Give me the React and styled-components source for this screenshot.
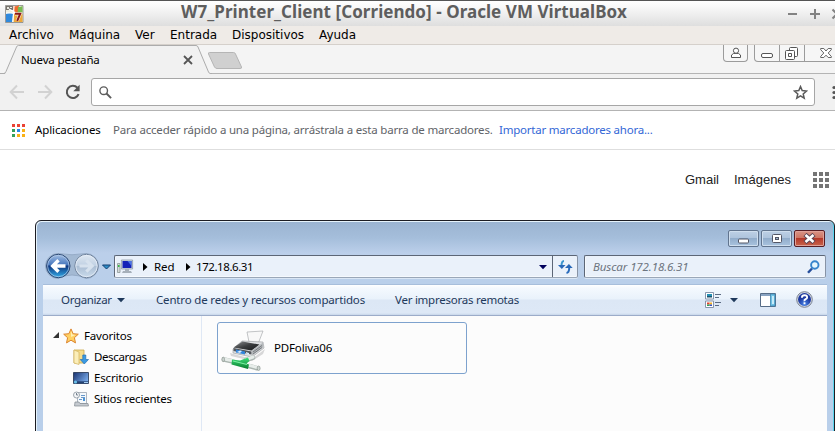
import React from 'react';
import styled, { createGlobalStyle } from 'styled-components';

const Global = createGlobalStyle`
  * { box-sizing: border-box; }
  html, body { margin: 0; padding: 0; }
  body { width: 835px; height: 431px; overflow: hidden; background: #fff; }
  svg { display: block; flex: none; }
`;

const ui = `"Noto Sans", "Open Sans", sans-serif`;

const Screen = styled.div`
  width: 835px;
  height: 431px;
  overflow: hidden;
  display: flex;
  flex-direction: column;
  background: #fff;
`;

const Label = styled.span`
  flex: none;
  display: block;
  width: ${(p) => (p.$w ? `${p.$w}px` : 'auto')};
  font: ${(p) => (p.$italic ? 'italic ' : '')}${(p) => p.$size || 11.5}px/16px ${(p) => p.$font || ui};
  letter-spacing: ${(p) => p.$ls || 0}px;
  color: ${(p) => p.$color || '#000'};
  white-space: nowrap;
`;

/* ---------- host window ---------- */
const TitleBar = styled.header`
  flex: none;
  height: 26px;
  display: flex;
  align-items: center;
  padding-left: 5px;
  border-top: 1px solid #555;
  background: linear-gradient(#fff, #fafafa 20%, #dedede);
`;
const HostTitle = styled.h1`
  flex: none;
  margin: 0 0 0 157px;
  width: 606px;
  font: bold 17px/20px "Noto Sans", sans-serif;
  padding-bottom: 3px;
  letter-spacing: ${(p) => p.$ls}px;
  color: #5e5e5e;
  white-space: nowrap;
`;
const MenuBar = styled.nav`
  flex: none;
  height: 19px;
  display: flex;
  align-items: center;
  padding: 0 0 0 9px;
  background: #efebe7;
  border-bottom: 1px solid #d5d0cb;
`;

/* ---------- browser ---------- */
const TabStrip = styled.div`
  flex: none;
  height: 29px;
  display: flex;
  align-items: flex-start;
  background: #f4f4f4;
  box-shadow: inset 0 -1px #b4b4b4;
`;
const Tab = styled.div`
  position: relative;
  flex: none;
  width: 212px;
  height: 29px;
  padding: 7px 0 0 21px;
  display: flex;
`;
const TabShape = styled.svg`
  position: absolute;
  left: 0;
  top: 0;
`;
const TabContent = styled.div`
  position: relative;
  display: flex;
`;
const NewTab = styled.svg`
  overflow: visible;
`;
const ChromeButtons = styled.div`
  flex: none;
  width: ${(p) => p.$w}px;
  height: 17px;
  margin-left: ${(p) => p.$ml}px;
  display: flex;
  border: 1px solid #9b9b9b;
  border-top: 0;
  border-radius: 0 0 4px 4px;
  background: #f6f6f6;
`;
const ChromeButton = styled.div`
  flex: none;
  width: ${(p) => p.$w}px;
  padding: 0 0 0 ${(p) => p.$pl}px;
  border-right: ${(p) => (p.$last ? 0 : 1)}px solid #9b9b9b;
`;
const BrowserBar = styled.div`
  flex: none;
  height: 37px;
  display: flex;
  align-items: center;
  padding: 0 0 0 9px;
  background: #f1f1f1;
  border-bottom: 1px solid #b3b3b3;
`;
const Omnibox = styled.div`
  flex: none;
  width: 724px;
  height: 28px;
  margin: 0 17px 0 10px;
  display: flex;
  align-items: center;
  justify-content: space-between;
  padding: 0 6px 0 7px;
  border: 1px solid #a6a6a6;
  border-radius: 3px;
  background: #fff;
`;
const Bookmarks = styled.div`
  flex: none;
  height: 39px;
  display: flex;
  align-items: center;
  padding-left: 12px;
  border-bottom: 1px solid #dedede;
`;
const DotGrid = styled.div`
  flex: none;
  display: grid;
  grid-template-columns: repeat(3, ${(p) => p.$s}px);
  grid-auto-rows: ${(p) => p.$s}px;
  gap: ${(p) => p.$gap}px;
  margin-right: ${(p) => p.$mr || 0}px;
`;
const Dot = styled.i`
  background: ${(p) => p.$c};
`;
const GoogleLinks = styled.div`
  flex: none;
  height: 70px;
  display: flex;
  align-items: center;
  padding: 0 0 10px 685px;
`;

/* ---------- explorer window ---------- */
const Explorer = styled.section`
  flex: none;
  width: 800px;
  height: 230px;
  margin-left: 35px;
  padding: 0 6px 0 7px;
  border: 1px solid #1c1c22;
  border-radius: 6px 6px 0 0;
  box-shadow: inset 1px 1px #e6f3fb, inset -1px 0 #58d4ee;
  background: linear-gradient(#9ab3d0 0, #a5bedb 17px, #bbcfea 32px, #b9cfea 62px);
`;
const Caption = styled.div`
  height: 34px;
  display: flex;
  justify-content: flex-end;
  gap: 2px;
  padding: 9px 3px 0 0;
`;
const CaptionButton = styled.div`
  width: 31px;
  height: 17px;
  display: flex;
  align-items: center;
  justify-content: center;
  border: 1px solid ${(p) => (p.$close ? '#571d24' : '#61748e')};
  border-radius: 2px;
  box-shadow: inset 0 0 0 1px ${(p) => (p.$close ? '#e0a198' : '#cfdeee')};
  background: ${(p) =>
    p.$close
      ? 'linear-gradient(#d99587, #cd7362 48%, #b5392a 50%, #c8654d)'
      : 'linear-gradient(#bed0e5, #adc3dc 48%, #92adcb 50%, #a9c3df)'};
`;
const NavRow = styled.div`
  height: 29px;
  display: flex;
  align-items: flex-start;
  padding-left: 2px;
`;
const NavSlot = styled.div`
  flex: none;
  width: 69px;
  margin-top: -3px;
`;
const Field = styled.div`
  flex: none;
  width: ${(p) => p.$w}px;
  height: 23px;
  margin-right: ${(p) => p.$mr || 0}px;
  padding: 0 0 0 ${(p) => p.$pl}px;
  display: flex;
  align-items: center;
  border: 1px solid #5c6676;
  border-bottom-color: #9aa7b8;
  border-right-color: #8793a5;
  border-radius: 2px;
  box-shadow: 0 1px #d9e6f5, inset 0 -1px #f5f9fd, inset 1px 0 #f5f9fd;
  background: #eaf1fa;
`;
const Refresh = styled.div`
  width: 25px;
  height: 21px;
  display: flex;
  align-items: center;
  justify-content: center;
  border-left: 1px solid #5c6676;
`;
const Client = styled.div`
  width: 784px;
  height: 166px;
  background: #fcfcfc;
`;
const CommandBar = styled.div`
  height: 32px;
  display: flex;
  align-items: center;
  padding: 0 0 1px 18px;
  border-top: 1px solid #a7bedb;
  border-bottom: 1px solid #9cacc9;
  background: linear-gradient(#fff 0, #f4f9fe 3px, #e9f2fb 14px, #dce7f5 15px, #dde8f6 28px, #c7d6e9 30px);
`;
const Panes = styled.div`
  display: flex;
  height: 134px;
`;
const Sidebar = styled.div`
  flex: none;
  width: 159px;
  border-right: 1px solid #dfe8f5;
  padding-top: 9px;
`;
const TreeRow = styled.div`
  height: 21px;
  display: flex;
  align-items: center;
  padding-left: ${(p) => p.$pl}px;
`;
const TreeIcon = styled.div`
  flex: none;
  width: 16px;
  margin-right: 5px;
`;
const Files = styled.div`
  padding: 6px 0 0 15px;
`;
const FileItem = styled.div`
  width: 250px;
  height: 52px;
  display: flex;
  align-items: center;
  padding-left: 2px;
  border: 1px solid #7da2ce;
  border-radius: 3px;
`;
const Slot = styled.div`
  flex: none;
  width: ${(p) => p.$w}px;
`;

/* ---------- icons ---------- */
const VmIcon = () => (
  <svg width="19" height="18" viewBox="0 0 19 18">
    <path fill="#ededdf" stroke="#777" strokeWidth=".7" d="M.5.5h17.500v17H.5z" />
    <path fill="#77736d" d="M1 1h7v4H1z" />
    <path fill="#e8e8e0" d="M2 2h2v2H2zM5 2h2v1H5z" />
    <path fill="#ef6a2d" d="M8 1q4 1 6-1l-1 8-5 1z" />
    <path fill="#78bb50" d="M13 2q3 0 4.500-1v7l-5 1z" />
    <path fill="#2f89dc" d="M1 9q4-2 7 0l-1 8H1z" />
    <path fill="#eda83a" d="M8 9h9.500v8H8z" />
    <path fill="none" stroke="#fff" strokeWidth="1.200" d="M9 1 8 17M1 8h16M4 4l9 5" />
    <path fill="none" stroke="#f7e5d0" strokeWidth="3.200" d="M10 8.800h5.200l-3 7" />
    <path fill="none" stroke="#8b1818" strokeWidth="2" d="M10 8.800h5.200l-3 7" />
  </svg>
);
const HostButtons = () => (
  <svg width="48" height="20" viewBox="0 0 48 20">
    <path fill="none" stroke="#828282" strokeWidth="2" d="M1 10h9M23 10h10M28 5v10M45.500 5.500l9 9m0-9-9 9" />
  </svg>
);
const Arrow = ({ flip }) => (
  <svg width="16" height="16" viewBox="0 0 16 16">
    <path fill="none" stroke="#d2d2d2" strokeWidth="2" d={flip ? 'M1 8h13M8 1.5 14.3 8 8 14.5' : 'M15 8H2M8 1.5 1.7 8 8 14.5'} />
  </svg>
);
const Reload = () => (
  <svg width="16" height="16" viewBox="0 0 16 16">
    <path fill="none" stroke="#555" strokeWidth="2" d="M13.6 10.2A6.1 6.1 0 1 1 12.4 3.8" />
    <path fill="#555" d="M14.6.8v6.4H8.3z" />
  </svg>
);
const Magnifier = () => (
  <svg width="13" height="13" viewBox="0 0 13 13">
    <circle cx="4.700" cy="4.700" r="3.800" fill="none" stroke="#5c5c5c" strokeWidth="1.400" />
    <path stroke="#5c5c5c" strokeWidth="1.900" d="m7.500 7.500 4.600 4.600" />
  </svg>
);
const Star = () => (
  <svg width="15" height="15" viewBox="0 0 15 15">
    <path fill="none" stroke="#5a5a5a" strokeWidth="1.500" d="m7.500 1.600 1.700 4 4.300.4-3.300 2.900 1 4.300-3.700-2.300-3.700 2.300 1-4.300L1.500 6l4.300-.4z" />
  </svg>
);
const Kebab = () => (
  <svg width="4" height="15" viewBox="0 0 4 15" fill="#555">
    <circle cx="2" cy="2.500" r="1.600" /><circle cx="2" cy="7.500" r="1.600" /><circle cx="2" cy="12.500" r="1.600" />
  </svg>
);
const Person = () => (
  <svg width="12" height="14" viewBox="0 0 12 14">
    <path fill="#fff" stroke="#555" d="M1.500 12.500v-2.500l2-1.500h5l2 1.500v2.500z" />
    <circle cx="6" cy="5.700" r="2.600" fill="#fff" stroke="#555" />
  </svg>
);
const MinOutline = () => (
  <svg width="12" height="14" viewBox="0 0 12 14">
    <rect x=".5" y="8.500" width="11" height="4" rx="1.500" fill="#fff" stroke="#555" />
  </svg>
);
const RestoreOutline = () => (
  <svg width="14" height="16" viewBox="0 0 14 16" fill="#fff" stroke="#555">
    <rect x="4.500" y="2.500" width="8" height="9" rx="1" />
    <rect x=".5" y="5.500" width="9" height="9" rx="1" />
    <path d="M3.500 8.500h3v3h-3z" />
  </svg>
);
const CloseOutline = () => (
  <svg width="12" height="14" viewBox="0 0 12 14">
    <path fill="#fff" stroke="#555" strokeWidth=".9" d="M.7 3.500h3.100L6 6l2.200-2.500h3.100v1.200L8.200 8l3.100 3.400v1.100H8.200L6 10.200l-2.200 2.300H.7v-1.100L3.800 8 .7 4.700z" />
  </svg>
);
const NavButtons = () => (
  <svg width="68" height="28" viewBox="0 0 68 28">
    <defs>
      <linearGradient id="back" x2="0" y2="1">
        <stop stopColor="#a4bfe4" /><stop offset=".45" stopColor="#4777bd" />
        <stop offset=".5" stopColor="#0e367f" /><stop offset="1" stopColor="#33aeea" />
      </linearGradient>
      <linearGradient id="fwd" x2="0" y2="1">
        <stop stopColor="#dfe8f2" /><stop offset=".48" stopColor="#c1d1e3" />
        <stop offset=".5" stopColor="#aabdd3" /><stop offset="1" stopColor="#cbdcec" />
      </linearGradient>
    </defs>
    <path fill="#a3b9d3" stroke="#8fa5c0" strokeWidth=".8" d="M13 1.500q14 2.500 28 0a12.500 12.500 0 0 1 0 25q-14-7-28 0a12.500 12.500 0 0 1 0-25z" />
    <circle cx="13.300" cy="14" r="11.700" fill="url(#back)" stroke="#2c4874" />
    <circle cx="13.300" cy="14" r="10.700" fill="none" stroke="#b7cfea" strokeWidth=".7" />
    <path fill="none" stroke="#fff" strokeWidth="3.400" d="M20.500 14H8M13.500 8.300 7.700 14l5.800 5.700" />
    <circle cx="41.500" cy="14" r="11.700" fill="url(#fwd)" stroke="#71849d" />
    <circle cx="41.500" cy="14" r="10.700" fill="none" stroke="#e6eef7" strokeWidth=".8" />
    <path fill="none" stroke="#d7e2ee" strokeWidth="3.200" d="M34.500 14h12M41.300 8.300l5.800 5.700-5.800 5.700" />
    <path fill="#2d8cc5" stroke="#123f72" d="M57.500 13h8l-4 4z" />
  </svg>
);
const Computer = () => (
  <svg width="17" height="16" viewBox="0 0 17 16">
    <path fill="#d4dada" stroke="#8b9797" strokeWidth=".8" d="M.5 4.500H3v9H.5z" />
    <path fill="#32b841" d="M1 6h1.500v2H1z" />
    <path fill="#d2dae2" stroke="#8b98a7" strokeWidth=".8" d="M4.400 1h11.200v9H4.400z" />
    <path fill="#1420b8" d="M5.500 2h9v7h-9z" />
    <path fill="#4b75e4" d="M10.500 2h4v5z" />
    <path fill="#a6b0ba" d="M8 10h4v2H8zM6 12h8l1 2H5z" />
  </svg>
);
const Triangle = ({ dir = 'down', color = '#1e395b', size = 8 }) => (
  <svg width={size} height={size} viewBox="0 0 8 8">
    <path fill={color} d={dir === 'down' ? 'M0 2h8L4 6.300z' : 'M2 0v8l4.500-4z'} />
  </svg>
);
const RefreshIcon = () => (
  <svg width="15" height="14" viewBox="0 0 15 14">
    <path fill="none" stroke="#3b96cf" strokeWidth="2" d="M6 1Q3.500 1 3.500 6" />
    <path fill="#2868b8" d="M0 5h7.500L3.800 9z" />
    <path fill="none" stroke="#286abb" strokeWidth="2" d="M8.500 13q2.700-.5 2.700-5" />
    <path fill="#2868b8" d="M7 8h7.700l-3.800-4z" />
  </svg>
);
const BlueSearch = () => (
  <svg width="13" height="14" viewBox="0 0 13 14">
    <path stroke="#254e9b" strokeWidth="2.400" d="m5 8.500-4 4.300" />
    <circle cx="7.800" cy="5" r="3.700" fill="#e6f6fd" stroke="#3684cc" strokeWidth="1.900" />
  </svg>
);
const ViewIcon = () => (
  <svg width="16" height="16" viewBox="0 0 16 16">
    <path fill="#fff" stroke="#7c8ba3" strokeWidth=".9" d="M.5.500h8v6.500h-8zM.5 9h8v6.500h-8z" />
    <path fill="#2590b4" d="M2 2h5v3H2z" /><path fill="#1c5470" d="M2 4h5v1.500H2z" />
    <path fill="#e43c33" d="M2 10.500h2.500v2H2z" /><path fill="#f5b021" d="M4.500 10.500H7v2H4.500z" />
    <path fill="#34a353" d="M2 12.500h2.500v1.500H2z" /><path fill="#3455c0" d="M4.500 12.500H7v1.500H4.500z" />
    <path stroke="#5b6b83" d="M10 2.500h6M10 5.500h4M10 10.500h6M10 13.500h4" />
  </svg>
);
const PaneIcon = () => (
  <svg width="16" height="14" viewBox="0 0 16 14">
    <path fill="#fff" stroke="#566c87" d="M.5.500h15v13H.5z" />
    <path fill="#88a3c2" d="M1 1h14v2H1z" />
    <path fill="#6fc1e5" stroke="#3a84ad" strokeWidth=".8" d="M10.500 1h4.500v12h-4.500z" />
    <path fill="#c6ecfa" d="M12 3h2v8h-2z" />
  </svg>
);
const Help = () => (
  <svg width="17" height="17" viewBox="0 0 17 17">
    <defs>
      <radialGradient id="help" cy=".85"><stop stopColor="#4886ea" /><stop offset="1" stopColor="#1c389e" /></radialGradient>
    </defs>
    <circle cx="8.500" cy="8.500" r="7.800" fill="#d8dde4" stroke="#777f90" />
    <circle cx="8.500" cy="8.500" r="6.500" fill="url(#help)" />
    <path fill="none" stroke="#fff" strokeWidth="1.900" d="M5.900 6.700Q6 4.300 8.600 4.300T11.100 6.400Q11.100 7.500 9.600 8.200T8.500 10.200M8.500 11.300v2" />
  </svg>
);
const Favorite = () => (
  <svg width="16" height="16" viewBox="0 0 16 16">
    <path fill="#ffd164" stroke="#dc852f" d="m8 .9 2.100 4.800 5.200.5-3.900 3.500 1.100 5.200L8 12.200l-4.500 2.700 1.100-5.200L.7 6.200l5.200-.5z" />
    <path fill="#fff0b7" d="m8 3 1.300 3.600 3 .3L8 9z" />
  </svg>
);
const Downloads = () => (
  <svg width="16" height="16" viewBox="0 0 16 16">
    <path fill="#f5dc8c" stroke="#caa84d" strokeWidth=".8" d="M1 1h10v13H1z" />
    <path fill="#fbeeb9" stroke="#d2b35f" strokeWidth=".7" d="m1 1 5 2v12.500L1 14z" />
    <path fill="#3a9ae2" stroke="#226fb5" strokeWidth=".7" d="M9.800 6h3v4.500h2.700L11.300 15 7.200 10.500h2.600z" />
  </svg>
);
const Desktop = () => (
  <svg width="16" height="16" viewBox="0 0 16 16">
    <defs><linearGradient id="desk" x2="1" y2=".6"><stop stopColor="#18326f" /><stop offset="1" stopColor="#78a9e8" /></linearGradient></defs>
    <path fill="url(#desk)" stroke="#1f304b" strokeWidth=".8" d="M.5 2.500h15v11H.5z" />
    <path fill="#244273" d="M1 11.300h14v2H1z" /><circle cx="2.500" cy="12" r="1.600" fill="#69bfe8" />
    <path fill="#a4cef3" d="M11 12h4v1h-4z" />
  </svg>
);
const Recent = () => (
  <svg width="16" height="16" viewBox="0 0 16 16">
    <path fill="#f5f9fc" stroke="#9aa5b0" strokeWidth=".8" d="M4.500 1.500h9v11h-9z" />
    <path stroke="#6898ca" d="M8 4.500h4M8 6.500h4M6 8.500h3" /><path fill="#4d94d5" d="M10 7h2v3h-2z" />
    <path fill="#c5cad0" stroke="#828990" strokeWidth=".7" d="M2 11h4l1 1.500h8l.5 2.500H1.500z" />
    <circle cx="3.500" cy="4" r="3" fill="#f4f6f8" stroke="#87909a" strokeWidth=".8" />
    <path fill="none" stroke="#596776" strokeWidth=".8" d="M3.500 2v2h1.500" />
  </svg>
);
const Printer = () => (
  <svg width="46" height="46" viewBox="0 -2 46 46">
    <defs>
      <linearGradient id="body" x2="1" y2="1"><stop stopColor="#8c8e90" /><stop offset=".5" stopColor="#3a3c3e" /><stop offset="1" stopColor="#17191b" /></linearGradient>
      <linearGradient id="pipe" x2="0" y2="1"><stop stopColor="#3ee07a" /><stop offset="1" stopColor="#067a2c" /></linearGradient>
    </defs>
    <path fill="#9fa1a3" opacity=".4" d="m10 26 22 6 13-10-2 5-11 7-21-5z" />
    <path fill="#f8f8f8" stroke="#a9acaf" strokeWidth=".7" d="m27 5 16-1-5 13-9-2z" />
    <path fill="#dfe1e3" stroke="#96999c" strokeWidth=".6" d="m13 22 9-8 21 1 1 6-12 9-19-4z" />
    <path fill="url(#body)" d="m13.500 20.500 9-6 17 3-8 6z" />
    <path fill="#b4b8bb" d="m32 23.500 11-8v5l-11 8z" />
    <path stroke="#5c6064" strokeWidth=".7" d="m33 25 9-6.500M33 27l9-6.500" />
    <path fill="#54585c" d="m13.500 21 18 3.500v3l-18-3.500z" />
    <path fill="#3284da" d="m16 22.500 9 2v3l-9-2z" />
    <path fill="#dbeeff" d="m17 25 3-1.500 2 .5-2 2zM26 25l3 1v1.500l-3-1z" />
    <path stroke="#aab5b0" strokeWidth="4.600" strokeLinecap="round" d="m4 32.500 9 2M29 39l8 2.200M26 33l7-2.500" />
    <path stroke="#e7edea" strokeWidth="3" strokeLinecap="round" d="m4.500 32 9 2M29 38.300l8 2.200M26 32.500l7-2.500" />
    <path fill="url(#pipe)" d="m12 32.500 8 1 8-3 1.500 3.500-3 2.500 2.500 1-1 4.500-16.500-4.500z" />
    <path stroke="#7df0a3" strokeWidth="1" d="m13 34 14 3.500" />
    <ellipse cx="3.200" cy="32.400" rx="1.300" ry="2.300" fill="#cdd6d1" stroke="#7f8a85" strokeWidth=".6" />
    <ellipse cx="38.600" cy="41.300" rx="1.500" ry="2.300" fill="#cdd6d1" stroke="#7f8a85" strokeWidth=".6" />
  </svg>
);

const menu = [['Archivo', 60], ['Máquina', 66], ['Ver', 35], ['Entrada', 62], ['Dispositivos', 87], ['Ayuda', 50]];
const appDots = ['#ea4335', '#ea4335', '#ea4335', '#34a05a', '#2688eb', '#f9b115', '#34a05a', '#f9b115', '#f9b115'];
const places = [['Descargas', Downloads, -0.38], ['Escritorio', Desktop, -0.18], ['Sitios recientes', Recent, -0.2]];

export default function App() {
  return (
    <Screen>
      <Global />
      <TitleBar>
        <VmIcon />
        <HostTitle $ls={0.05}>W7_Printer_Client [Corriendo] - Oracle VM VirtualBox</HostTitle>
        <HostButtons />
      </TitleBar>
      <MenuBar>
        {menu.map(([t, w]) => <Label key={t} $w={w} $size={12} $font={'"DejaVu Sans", sans-serif'}>{t}</Label>)}
      </MenuBar>
      <TabStrip>
        <Tab>
          <TabShape width="212" height="29" viewBox="0 0 212 29">
            <path fill="#f1f1f1" d="M5 29 17 .500h181L210 29z" />
            <path fill="none" stroke="#acacac" d="M0 28.500h4q1 0 2-2L16.500 2Q17 .500 18.500.500H196q1.500 0 2 1.500L208.500 27q.7 1.500 2 1.500h2" />
          </TabShape>
          <TabContent>
            <Label $w={162} $ls={-0.15}>Nueva pestaña</Label>
            <svg width="10" height="16" viewBox="0 0 10 16"><path stroke="#555" strokeWidth="1.800" d="m1 4 8 8m0-8-8 8" /></svg>
          </TabContent>
        </Tab>
        <NewTab width="36" height="25" viewBox="0 0 36 25">
          <path fill="#d0d0d0" stroke="#b5b5b5" d="M-3.500 9q-.5-1.500 1-1.500h24q1.500 0 2 1.500l6 13q.5 1.500-1.500 1.500H5q-1.500 0-2.500-1.500z" />
        </NewTab>
        <ChromeButtons $w={25} $ml={475}><ChromeButton $w={23} $pl={6} $last><Person /></ChromeButton></ChromeButtons>
        <ChromeButtons $w={110} $ml={6}>
          <ChromeButton $w={25} $pl={6}><MinOutline /></ChromeButton>
          <ChromeButton $w={25} $pl={5}><RestoreOutline /></ChromeButton>
          <ChromeButton $w={58} $pl={15} $last><CloseOutline /></ChromeButton>
        </ChromeButtons>
      </TabStrip>
      <BrowserBar>
        <Slot $w={28}><Arrow /></Slot>
        <Slot $w={28}><Arrow flip /></Slot>
        <Reload />
        <Omnibox><Magnifier /><Star /></Omnibox>
        <Kebab />
      </BrowserBar>
      <Bookmarks>
        <DotGrid $s={3} $gap={2} $mr={10}>{appDots.map((c, i) => <Dot key={i} $c={c} />)}</DotGrid>
        <Label $w={78} $ls={-0.1}>Aplicaciones</Label>
        <Label $w={386} $ls={-0.19} $color="#5f6368">Para acceder rápido a una página, arrástrala a esta barra de marcadores.</Label>
        <Label $ls={-0.22} $color="#3367d6">Importar marcadores ahora...</Label>
      </Bookmarks>
      <GoogleLinks>
        <Label $w={49} $size={13} $font={'"Liberation Sans", sans-serif'} $color="#222">Gmail</Label>
        <Label $w={79} $size={13} $font={'"Liberation Sans", sans-serif'} $color="#222">Imágenes</Label>
        <DotGrid $s={4} $gap={2}>{appDots.map((_, i) => <Dot key={i} $c="#757575" />)}</DotGrid>
      </GoogleLinks>
      <Explorer>
        <Caption>
          <CaptionButton><svg width="12" height="11"><rect x=".5" y="6" width="10" height="4" rx="1" fill="#fff" stroke="#535666" /></svg></CaptionButton>
          <CaptionButton><svg width="12" height="11"><rect x="1.500" y="1.500" width="9" height="8" rx="1" fill="#fff" stroke="#535666" /><rect x="4.500" y="4.500" width="3" height="2" fill="#9fb6d0" stroke="#535666" /></svg></CaptionButton>
          <CaptionButton $close><svg width="13" height="11"><path stroke="#5c4554" strokeWidth="4.600" d="m2 1.500 9 8m0-8-9 8" /><path stroke="#fff" strokeWidth="2.600" d="m2.500 2 8 7m0-7-8 7" /></svg></CaptionButton>
        </Caption>
        <NavRow>
          <NavSlot><NavButtons /></NavSlot>
          <Field $w={464} $mr={6} $pl={2}>
            <Slot $w={24}><Computer /></Slot>
            <Slot $w={13}><Triangle dir="right" color="#000" /></Slot>
            <Label $w={30} $ls={-0.1}>Red</Label>
            <Slot $w={12}><Triangle dir="right" color="#000" /></Slot>
            <Label $w={343} $ls={-0.43}>172.18.6.31</Label>
            <Slot $w={13}><Triangle color="#00005c" /></Slot>
            <Refresh><RefreshIcon /></Refresh>
          </Field>
          <Field $w={242} $pl={8}>
            <Label $w={214} $ls={-0.1} $italic $color="#6d7580">Buscar 172.18.6.31</Label>
            <BlueSearch />
          </Field>
        </NavRow>
        <Client>
          <CommandBar>
            <Label $w={56} $ls={-0.35} $color="#1e395b">Organizar</Label>
            <Slot $w={39}><Triangle /></Slot>
            <Label $w={239} $ls={-0.17} $color="#1e395b">Centro de redes y recursos compartidos</Label>
            <Label $w={310} $ls={-0.25} $color="#1e395b">Ver impresoras remotas</Label>
            <Slot $w={25}><ViewIcon /></Slot>
            <Slot $w={30}><Triangle /></Slot>
            <Slot $w={36}><PaneIcon /></Slot>
            <Help />
          </CommandBar>
          <Panes>
            <Sidebar>
              <TreeRow $pl={10}>
                <Slot $w={10}><svg width="7" height="7"><path fill="#333" d="M6 0v6H0z" /></svg></Slot>
                <TreeIcon><Favorite /></TreeIcon>
                <Label $ls={-0.2}>Favoritos</Label>
              </TreeRow>
              {places.map(([t, Icon, ls]) => (
                <TreeRow key={t} $pl={30}><TreeIcon><Icon /></TreeIcon><Label $ls={ls}>{t}</Label></TreeRow>
              ))}
            </Sidebar>
            <Files>
              <FileItem><Slot $w={54}><Printer /></Slot><Label $ls={-0.15}>PDFoliva06</Label></FileItem>
            </Files>
          </Panes>
        </Client>
      </Explorer>
    </Screen>
  );
}
